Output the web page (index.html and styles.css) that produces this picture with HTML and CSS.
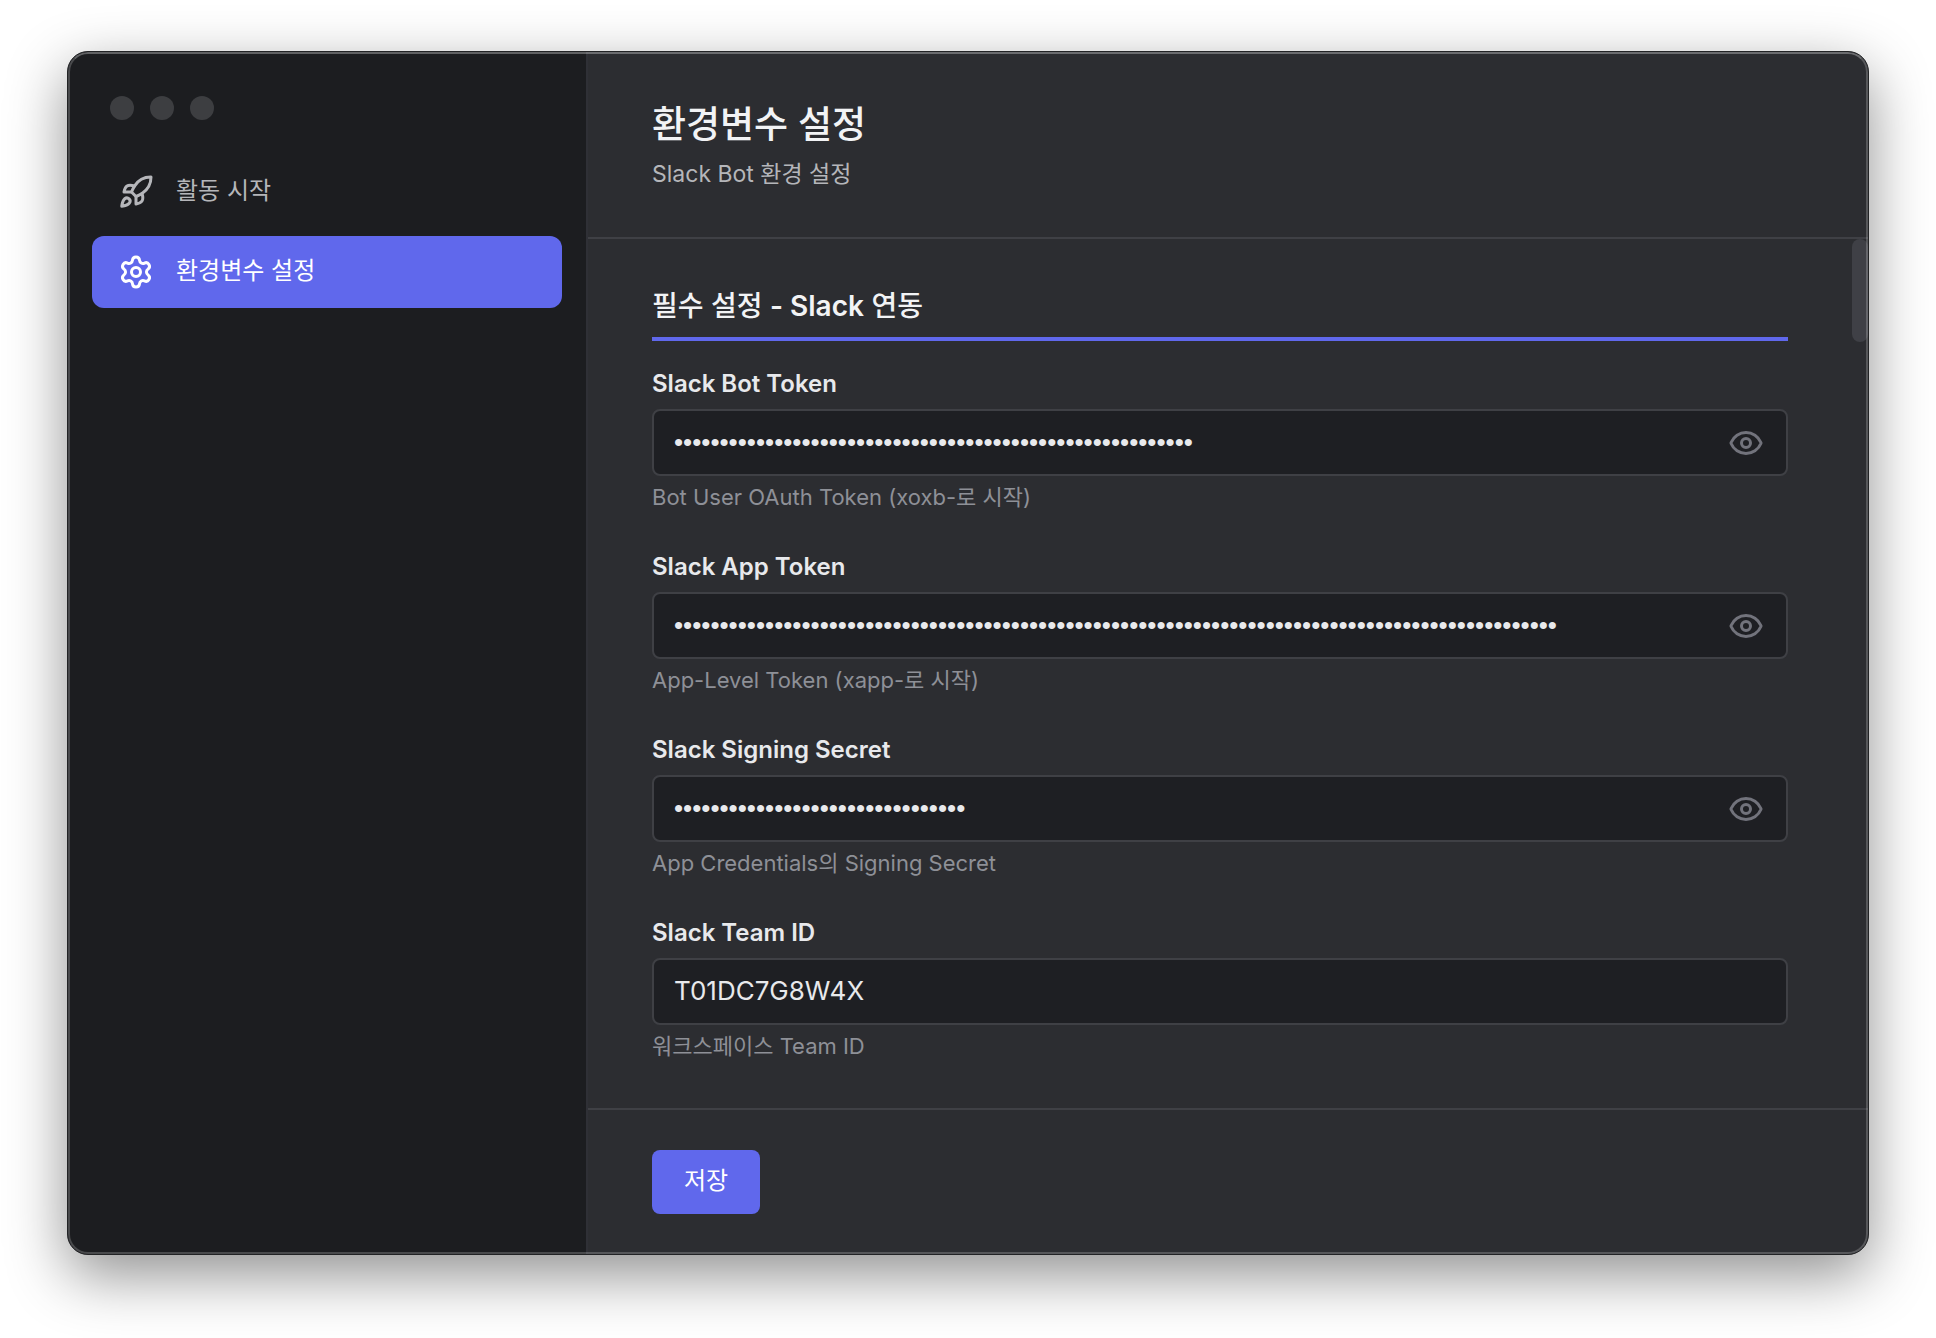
FILE: index.html
```html
<!DOCTYPE html>
<html lang="ko">
<head>
    <meta charset="UTF-8">
    <meta name="viewport" content="width=device-width, initial-scale=1.0">
    <title>환경변수 설정</title>
    <link rel="stylesheet" href="styles.css">
</head>
<body>
    <div class="window">
        <aside class="sidebar">
            <div class="traffic-lights">
                <span class="light"></span>
                <span class="light"></span>
                <span class="light"></span>
            </div>
            <nav class="nav">
                <a class="nav-item" href="#start">
                    <svg class="icon" viewBox="0 0 24 24" aria-hidden="true">
                        <path d="M4.5 16.5c-1.5 1.26-2 5-2 5s3.74-.5 5-2c.71-.84.7-2.13-.09-2.91a2.18 2.18 0 0 0-2.91-.09z"/>
                        <path d="m12 15-3-3a22 22 0 0 1 2-3.95A12.88 12.88 0 0 1 22 2c0 2.72-.78 7.5-6 11a22.35 22.35 0 0 1-4 2z"/>
                        <path d="M9 12H4s.55-3.03 2-4c1.62-1.08 5 0 5 0"/>
                        <path d="M12 15v5s3.03-.55 4-2c1.08-1.62 0-5 0-5"/>
                    </svg>
                    <span class="nav-label">활동 시작</span>
                </a>
                <a class="nav-item active" href="#settings" aria-current="page">
                    <svg class="icon" viewBox="0 0 24 24" aria-hidden="true">
                        <path d="M9.671 4.136a2.34 2.34 0 0 1 4.659 0 2.34 2.34 0 0 0 3.319 1.915 2.34 2.34 0 0 1 2.33 4.033 2.34 2.34 0 0 0 0 3.831 2.34 2.34 0 0 1-2.33 4.033 2.34 2.34 0 0 0-3.319 1.915 2.34 2.34 0 0 1-4.659 0 2.34 2.34 0 0 0-3.32-1.915 2.34 2.34 0 0 1-2.33-4.033 2.34 2.34 0 0 0 0-3.831A2.34 2.34 0 0 1 6.35 6.051a2.34 2.34 0 0 0 3.319-1.915"/>
                        <circle cx="12" cy="12" r="3"/>
                    </svg>
                    <span class="nav-label">환경변수 설정</span>
                </a>
            </nav>
        </aside>

        <main class="main">
            <header class="header">
                <h1>환경변수 설정</h1>
                <p>Slack Bot 환경 설정</p>
            </header>

            <div class="scroll-area">
                <form class="content" id="settingsForm">
                    <h2>필수 설정 <strong>- Slack</strong> 연동</h2>
                    <div class="form-group">
                        <label for="botToken">Slack Bot Token</label>
                        <div class="field">
                            <input type="password" id="botToken" name="botToken" autocomplete="off" value="xoxb-0000000000000-0000000000000-000000000000000000000000">
                            <button type="button" class="toggle" aria-label="Slack Bot Token 표시">
                                <svg class="icon" viewBox="0 0 24 24" aria-hidden="true">
                                    <path d="M2.062 12.348a1 1 0 0 1 0-.696 10.75 10.75 0 0 1 19.876 0 1 1 0 0 1 0 .696 10.75 10.75 0 0 1-19.876 0"/>
                                    <circle cx="12" cy="12" r="3"/>
                                </svg>
                            </button>
                        </div>
                        <p class="hint">Bot User OAuth Token (xoxb-로 시작)</p>
                    </div>
                    <div class="form-group">
                        <label for="appToken">Slack App Token</label>
                        <div class="field">
                            <input type="password" id="appToken" name="appToken" autocomplete="off" value="xapp-0-00000000000-0000000000000-0000000000000000000000000000000000000000000000000000000000000000">
                            <button type="button" class="toggle" aria-label="Slack App Token 표시">
                                <svg class="icon" viewBox="0 0 24 24" aria-hidden="true">
                                    <path d="M2.062 12.348a1 1 0 0 1 0-.696 10.75 10.75 0 0 1 19.876 0 1 1 0 0 1 0 .696 10.75 10.75 0 0 1-19.876 0"/>
                                    <circle cx="12" cy="12" r="3"/>
                                </svg>
                            </button>
                        </div>
                        <p class="hint">App-Level Token (xapp-로 시작)</p>
                    </div>
                    <div class="form-group">
                        <label for="signingSecret">Slack Signing Secret</label>
                        <div class="field">
                            <input type="password" id="signingSecret" name="signingSecret" autocomplete="off" value="00000000000000000000000000000000">
                            <button type="button" class="toggle" aria-label="Slack Signing Secret 표시">
                                <svg class="icon" viewBox="0 0 24 24" aria-hidden="true">
                                    <path d="M2.062 12.348a1 1 0 0 1 0-.696 10.75 10.75 0 0 1 19.876 0 1 1 0 0 1 0 .696 10.75 10.75 0 0 1-19.876 0"/>
                                    <circle cx="12" cy="12" r="3"/>
                                </svg>
                            </button>
                        </div>
                        <p class="hint">App Credentials의 Signing Secret</p>
                    </div>
                    <div class="form-group">
                        <label for="teamId">Slack Team ID</label>
                        <div class="field">
                            <input type="text" id="teamId" name="teamId" value="T01DC7G8W4X">
                        </div>
                        <p class="hint">워크스페이스 Team ID</p>
                    </div>
                </form>
                <div class="scrollbar"><div class="thumb"></div></div>
            </div>

            <footer class="footer">
                <button type="submit" class="save" form="settingsForm">저장</button>
            </footer>
        </main>
    </div>

    <script>
        document.querySelectorAll('.toggle').forEach(btn => {
            btn.addEventListener('click', () => {
                const input = btn.parentNode.querySelector('input');
                input.type = input.type === 'password' ? 'text' : 'password';
            });
        });

        document.getElementById('settingsForm').addEventListener('submit', e => e.preventDefault());
    </script>
</body>
</html>
```
FILE: styles.css
```css
* {
    box-sizing: border-box;
}
body {
    display: flex;
    min-height: 100vh;
    margin: 0;
    padding: 51px 67px 83px;
    background: #fff;
    color: #f2f3f5;
    font-family: Inter, "Noto Sans CJK KR", sans-serif;
}
h1, h2, p {
    margin: 0;
}
input, button {
    font-family: inherit;
}
.window {
    position: relative;
    display: flex;
    flex: 1;
    overflow: hidden;
    border: 1px solid #222325;
    border-radius: 21px;
    background: #2c2d31;
    box-shadow: 0 20px 60px rgba(0, 0, 0, 0.44);
}
/* light rim drawn over the window edge */
.window::after {
    content: "";
    position: absolute;
    inset: 0;
    border: 2px solid rgba(255, 255, 255, 0.2);
    border-top-color: rgba(255, 255, 255, 0.3);
    border-radius: 20px;
    pointer-events: none;
}
.icon {
    display: block;
    flex: none;
    width: 36px;
    height: 36px;
    fill: none;
    stroke: currentColor;
    stroke-width: 2;
    stroke-linecap: round;
    stroke-linejoin: round;
}

/* Sidebar */
.sidebar {
    flex: none;
    width: 520px;
    padding: 44px 24px;
    border-right: 2px solid #2f3036;
    background: #1c1d20;
}
.traffic-lights {
    display: flex;
    gap: 16px;
    padding: 0 18px;
    margin-bottom: 36px;
}
.light {
    width: 24px;
    height: 24px;
    border-radius: 50%;
    background: #3d3e41;
}
.nav {
    display: flex;
    flex-direction: column;
    gap: 8px;
}
.nav-item {
    display: flex;
    align-items: center;
    gap: 22px;
    height: 72px;
    padding: 0 26px;
    border-radius: 12px;
    color: #b5b6ba;
    font-size: 24px;
    line-height: 36px;
    text-decoration: none;
}
.nav-item.active {
    background: #6068ec;
    color: #fff;
}
.nav-label {
    padding-bottom: 2px;
}

/* Main */
.main {
    display: flex;
    flex: 1;
    flex-direction: column;
    min-width: 0;
}
.header {
    padding: 48px 64px 46px;
    border-bottom: 2px solid #3f4045;
}
.header h1 {
    margin-bottom: 8px;
    font-size: 37px;
    font-weight: 500;
    line-height: 50px;
}
.header p {
    color: #b5b6ba;
    font-size: 23px;
    line-height: 33px;
}
.scroll-area {
    display: flex;
    flex: 1;
}
.content {
    flex: 1;
    min-width: 0;
    padding: 48px 64px 0;
}
.content h2 {
    margin-bottom: 24px;
    padding-bottom: 12px;
    border-bottom: 4px solid #6068ec;
    font-size: 28px;
    font-weight: 500;
    line-height: 38px;
}
.content h2 strong {
    font-weight: 600;
}
.scrollbar {
    flex: none;
    width: 16px;
}
.thumb {
    height: 103px;
    border-radius: 8px;
    background: #3f4046;
}
.form-group {
    margin-bottom: 38px;
}
label {
    display: block;
    margin-bottom: 6px;
    color: #e8e9ec;
    font-size: 24px;
    font-weight: 600;
    line-height: 38px;
}
.field {
    display: flex;
    align-items: center;
    height: 67px;
    padding-right: 22px;
    border: 2px solid #3f4045;
    border-radius: 8px;
    background: #1e1f23;
}
.field:focus-within {
    border-color: #6068ec;
}
.field input {
    flex: 1;
    min-width: 0;
    padding: 0 20px 2px;
    border: none;
    outline: none;
    background: none;
    color: #e8e9ec;
    font-size: 26px;
    line-height: 36px;
}
.field input[type="password"] {
    font-family: "Liberation Sans", sans-serif;
}
.toggle {
    padding: 0;
    border: none;
    background: none;
    color: #72737c;
    cursor: pointer;
}
.hint {
    margin-top: 8px;
    color: #8e9097;
    font-size: 22px;
    line-height: 26px;
}

/* Footer */
.footer {
    padding: 40px 64px;
    border-top: 2px solid #3f4045;
}
.save {
    display: block;
    height: 64px;
    padding: 0 32px 2px;
    border: none;
    border-radius: 8px;
    background: #6068ec;
    color: #fff;
    font-size: 24px;
    line-height: 36px;
    cursor: pointer;
}
.save:hover {
    background: #525ae0;
}
```
